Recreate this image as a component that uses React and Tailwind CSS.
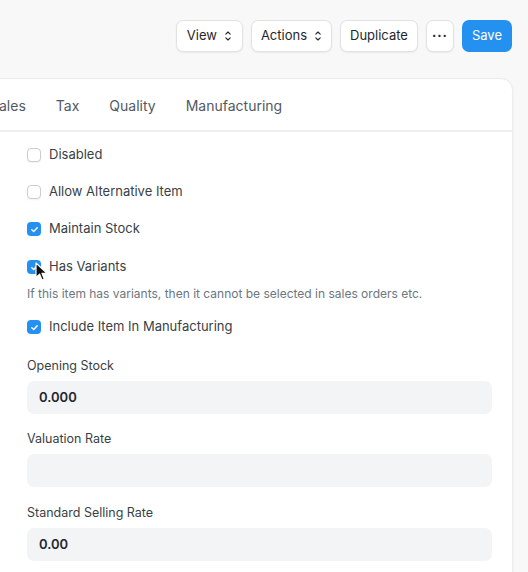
import { useState } from "react";

function UpDown() {
  return (
    <svg width="8" height="12" viewBox="0 0 8 12" fill="none" className="ml-[7px]">
      <path d="M1.8 4.2L4 2L6.2 4.2" stroke="#1f272e" strokeWidth="1.1" strokeLinecap="round" strokeLinejoin="round" />
      <path d="M1.8 7.8L4 10L6.2 7.8" stroke="#1f272e" strokeWidth="1.1" strokeLinecap="round" strokeLinejoin="round" />
    </svg>
  );
}

function Btn({ children, className = "" }) {
  return (
    <button
      className={
        "h-[32px] flex items-center rounded-[7px] bg-white border border-[#e2e2e2] shadow-[0_1px_2px_rgba(0,0,0,0.06)] text-[13px] text-[#1f272e] " +
        className
      }
    >
      {children}
    </button>
  );
}

function Check({ label, checked, className = "", cursor }) {
  return (
    <div className={"relative flex items-center h-[20px] " + className}>
      {checked ? (
        <span className="w-[14px] h-[14px] rounded-[4px] bg-[#2490ef] flex items-center justify-center">
          <svg width="9" height="9" viewBox="0 0 10 10" fill="none">
            <path d="M2 5.2L4.1 7.2L8 3" stroke="white" strokeWidth="1.6" strokeLinecap="round" strokeLinejoin="round" />
          </svg>
        </span>
      ) : (
        <span className="w-[14px] h-[14px] rounded-[4px] bg-white border border-[#c9ced3] shadow-[0_1px_2px_rgba(0,0,0,0.06)]" />
      )}
      <span className="ml-[8px] text-[13px] text-[#383f46]">{label}</span>
      {cursor && (
        <svg
          width="14"
          height="20"
          viewBox="0 0 14 20"
          className="absolute left-[8px] top-[5px]"
        >
          <path
            d="M1 1L1 15.5L4.6 12.2L7 18L9.3 17L7 11.4L12 11.4Z"
            fill="#111"
            stroke="white"
            strokeWidth="1.2"
            strokeLinejoin="round"
          />
        </svg>
      )}
    </div>
  );
}

function Field({ label, value, className = "" }) {
  return (
    <div className={className}>
      <div className="h-[18px] flex items-center text-[12.5px] text-[#383f46]">{label}</div>
      <div className="mt-[6px] h-[33px] rounded-[7px] bg-[#f3f4f5] flex items-center px-[12px] text-[13px] font-semibold text-[#1f272e]">
        {value}
      </div>
    </div>
  );
}

export default function App() {
  const [tab] = useState("Inventory");
  return (
    <div className="w-[528px] h-[572px] bg-[#f8f8f8] overflow-hidden font-['Inter',sans-serif]">
      <div className="flex justify-end gap-2 pt-[20px] pr-[16px]">
        <Btn className="pl-[10px] pr-[10px]">
          View
          <UpDown />
        </Btn>
        <Btn className="pl-[9px] pr-[9px]">
          Actions
          <UpDown />
        </Btn>
        <Btn className="px-[9px]">Duplicate</Btn>
        <Btn className="w-[28px] justify-center font-bold tracking-[1px]">···</Btn>
        <button className="h-[32px] px-[10px] rounded-[7px] bg-[#2490ef] text-white text-[13px]">Save</button>
      </div>

      <div className="mt-[26px] ml-[-20px] w-[533px] h-[520px] bg-white rounded-[12px] border border-[#ececec] shadow-[0_1px_3px_rgba(0,0,0,0.05)]" data-tab={tab}>
        <div className="h-[53px] pt-[1px] flex items-center gap-[30px] pl-[9px] border-b-[2px] border-[#efefef] text-[14px] text-[#525a62]">
          <span>Sales</span>
          <span>Tax</span>
          <span>Quality</span>
          <span>Manufacturing</span>
        </div>
        <div className="pl-[46px] pr-[20px] pt-[13px]">
          <Check label="Disabled" />
          <Check label="Allow Alternative Item" className="mt-[17px]" />
          <Check label="Maintain Stock" checked className="mt-[17px]" />
          <Check label="Has Variants" checked cursor className="mt-[18px]" />
          <div className="mt-[8px] h-[18px] flex items-center text-[12px] text-[#6c7680]">
            If this item has variants, then it cannot be selected in sales orders etc.
          </div>
          <Check label="Include Item In Manufacturing" checked className="mt-[14px]" />
          <Field label="Opening Stock" value="0.000" className="mt-[20px]" />
          <Field label="Valuation Rate" value="" className="mt-[16px]" />
          <Field label="Standard Selling Rate" value="0.00" className="mt-[17px]" />
        </div>
      </div>
    </div>
  );
}
